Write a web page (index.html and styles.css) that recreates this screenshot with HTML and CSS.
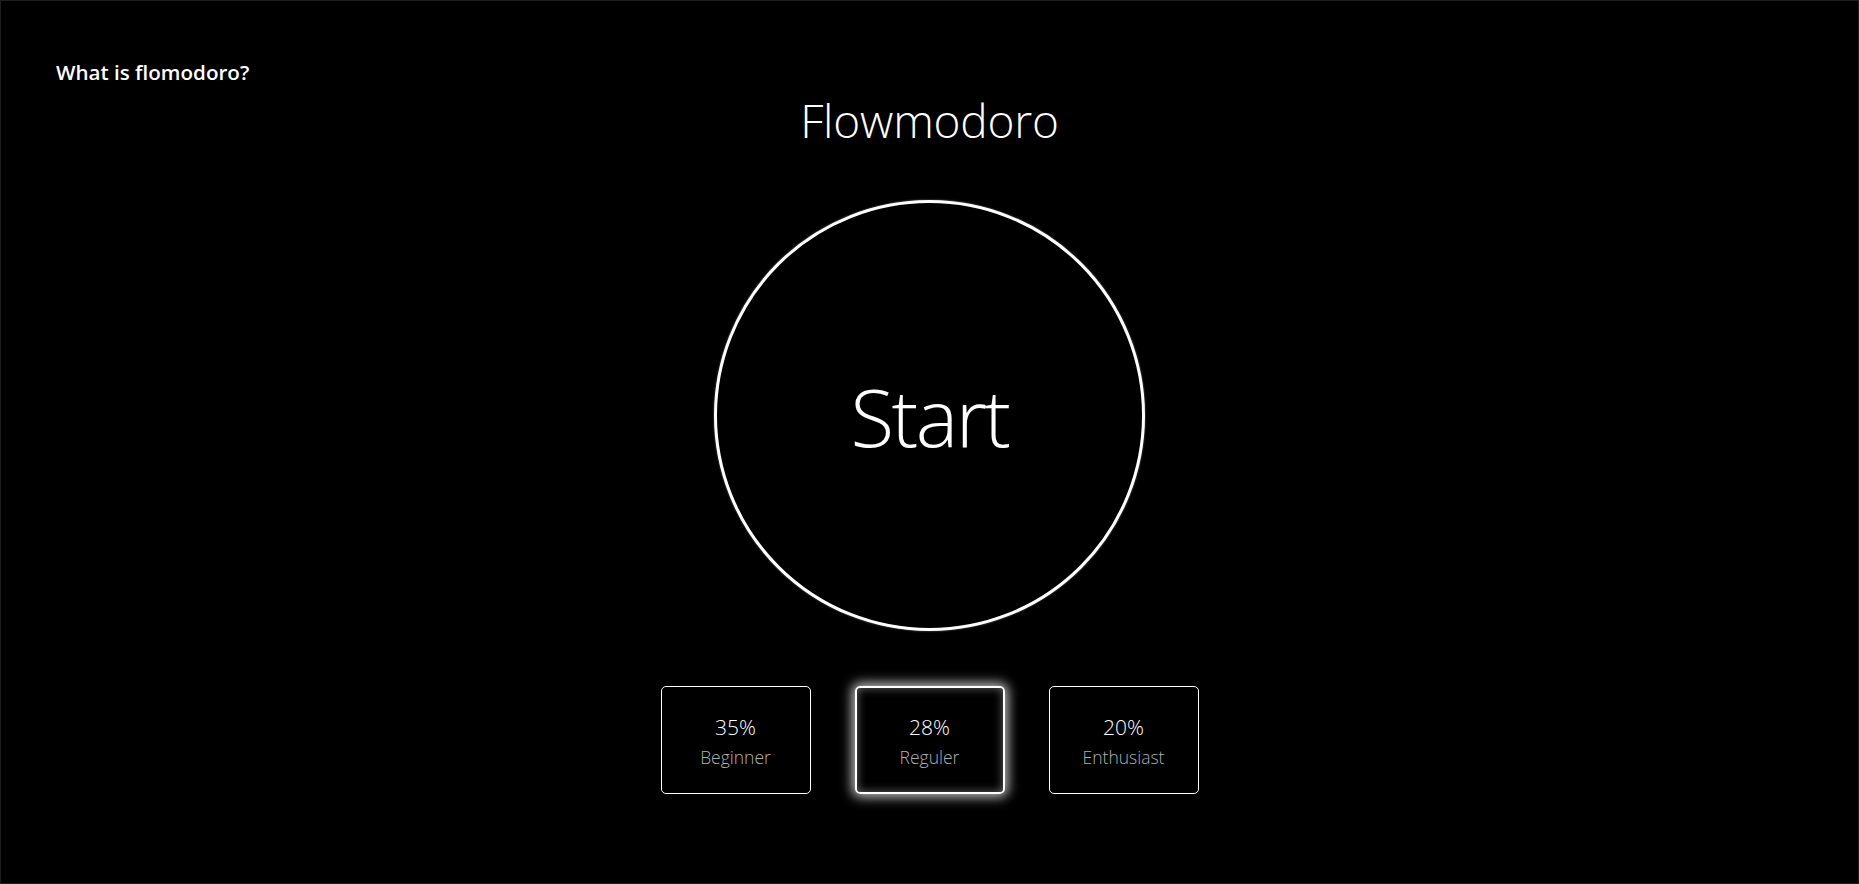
FILE: index.html
```html
<!DOCTYPE html>
<html lang="en">
<head>
<meta charset="utf-8">
<title>Flowmodoro</title>
<link rel="stylesheet" href="styles.css">
</head>
<body>
<div class="page">
  <header class="top">
    <a class="help" href="#">What is flomodoro?</a>
  </header>
  <main class="main">
    <h1 class="title">Flowmodoro</h1>
    <button class="start">Start</button>
    <div class="levels">
      <div class="level">
        <span class="pct">35%</span>
        <span class="name">Beginner</span>
      </div>
      <div class="level active">
        <span class="pct">28%</span>
        <span class="name">Reguler</span>
      </div>
      <div class="level">
        <span class="pct">20%</span>
        <span class="name">Enthusiast</span>
      </div>
    </div>
  </main>
</div>
</body>
</html>
```
FILE: styles.css
```css
html, body {
  margin: 0;
  padding: 0;
  background: #000;
}

body {
  font-family: "Open Sans", "Noto Sans", sans-serif;
  color: #fff;
}

.page {
  box-sizing: border-box;
  height: 100vh;
  border: 1px solid #1e1e1e;
  display: flex;
  flex-direction: column;
}

.top {
  padding: 61px 0 0 55px;
}

.help {
  display: inline-block;
  color: #fff;
  text-decoration: none;
  font-weight: 600;
  font-size: 20.6px;
  line-height: 1;
}

.main {
  display: flex;
  flex-direction: column;
  align-items: center;
}

.title {
  margin: 12px 0 0;
  font-size: 46px;
  font-weight: 300;
  line-height: 1;
  letter-spacing: -0.2px;
}

.start {
  box-sizing: border-box;
  margin-top: 57px;
  width: 431px;
  height: 431px;
  border-radius: 50%;
  border: 3px solid #fff;
  background: #000;
  color: #fff;
  font-family: inherit;
  font-weight: 300;
  font-size: 80px;
  letter-spacing: -2.5px;
  padding: 0;
  cursor: pointer;
  box-shadow: 0 0 2px rgba(255, 255, 255, 0.5);
}

.levels {
  display: flex;
  gap: 44px;
  margin-top: 55px;
}

.level {
  box-sizing: border-box;
  width: 150px;
  height: 108px;
  padding-top: 3px;
  border: 1px solid #fff;
  border-radius: 5px;
  display: flex;
  flex-direction: column;
  align-items: center;
  justify-content: center;
  gap: 6px;
  font-weight: 300;
}

.level.active {
  border: 2px solid #fff;
  box-shadow: 0 0 12px 3px rgba(255, 255, 255, 0.75), inset 0 0 10px rgba(255, 255, 255, 0.4);
}

.pct {
  font-size: 21px;
  line-height: 1.2;
  color: #fff;
}

.name {
  font-size: 17.5px;
  line-height: 1.2;
  color: #b0b0b0;
}
```
